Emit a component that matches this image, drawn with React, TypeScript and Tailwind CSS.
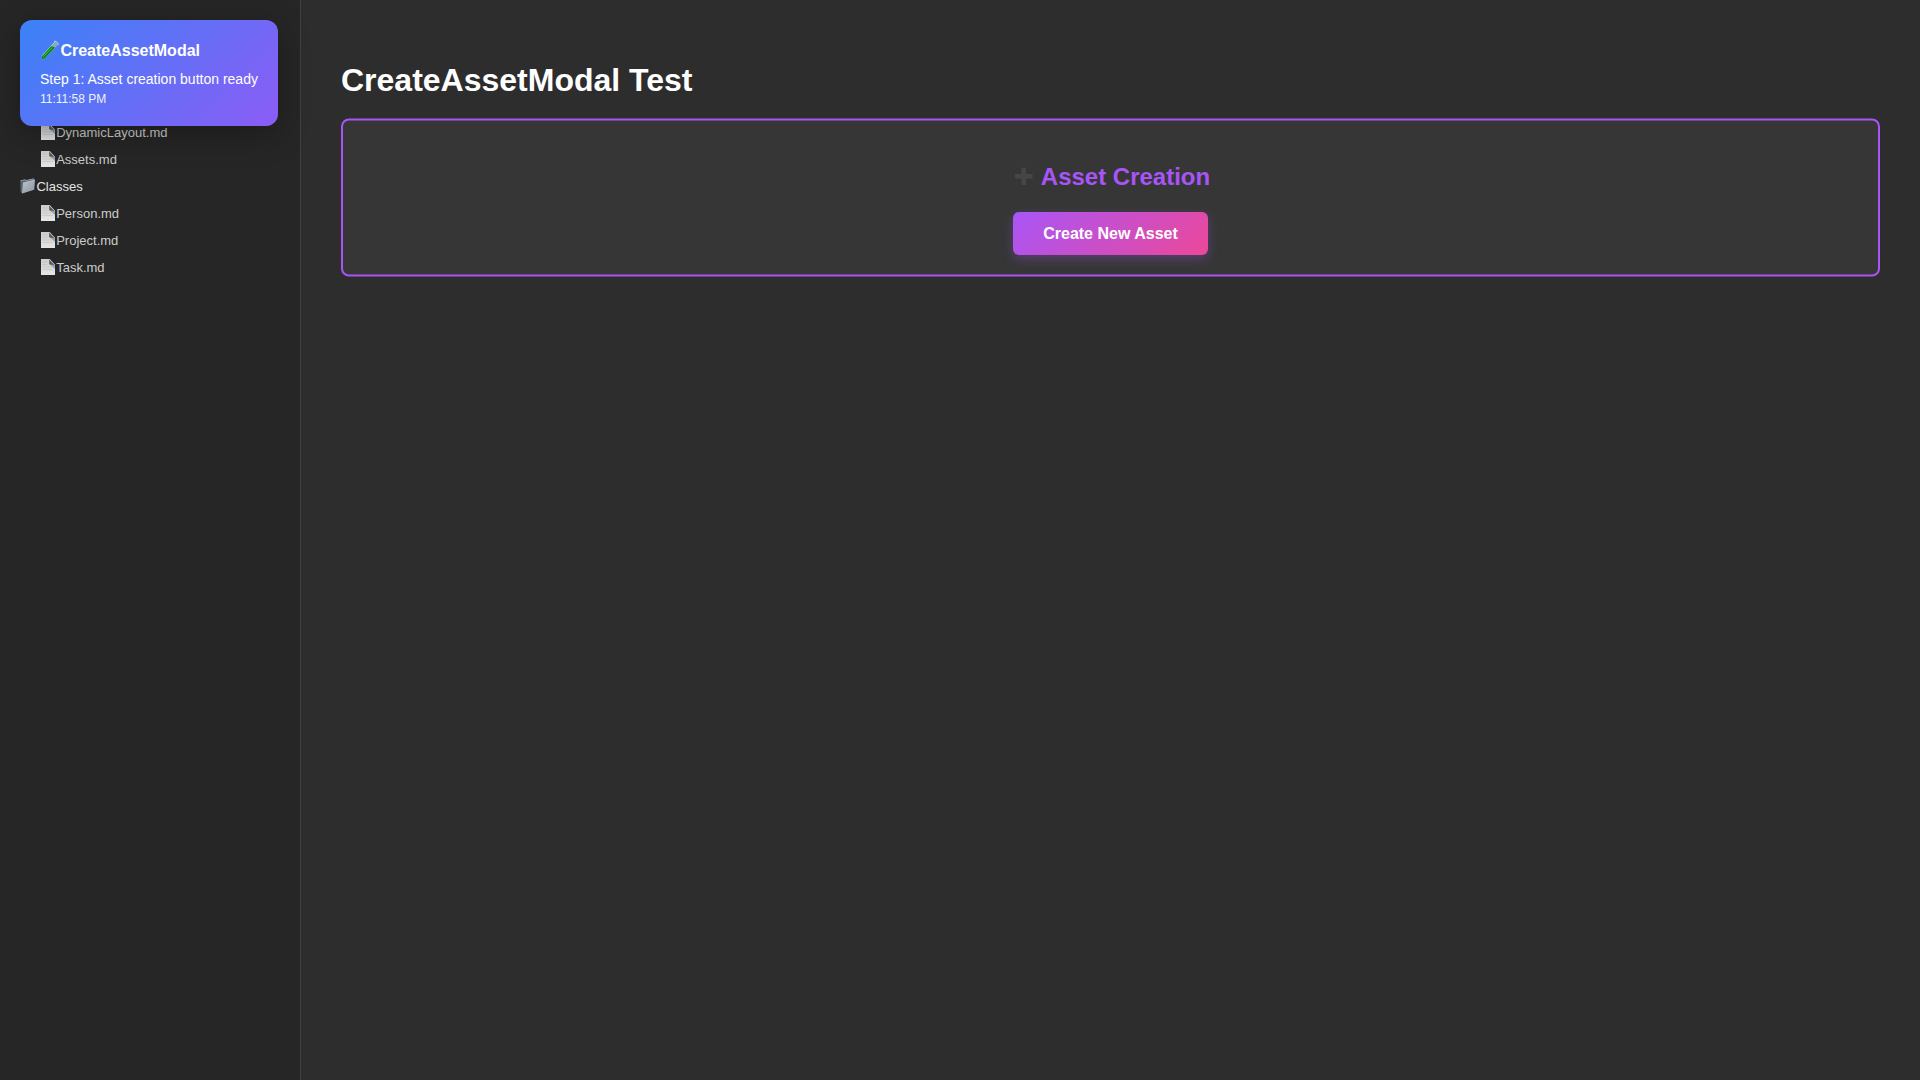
function FileIcon() {
  return (
    <svg className="relative -top-px h-4 w-[14px] shrink-0" viewBox="0 0 14 16">
      <defs>
        <linearGradient id="paper" x1="0" y1="0" x2="0" y2="1">
          <stop offset="0" stopColor="#cdcdcd" />
          <stop offset="1" stopColor="#e6e6e6" />
        </linearGradient>
        <linearGradient id="fold" x1="0" y1="1" x2="1" y2="0">
          <stop offset="0" stopColor="#3a3a3a" />
          <stop offset="1" stopColor="#8a8a8a" />
        </linearGradient>
      </defs>
      <path d="M0 0H8.5L14 6V16H0Z" fill="url(#paper)" />
      <path d="M7.5 4.5L14 6V10Z" fill="#8d8d8d" opacity=".7" />
      <path d="M8 .5L13.8 6.2L8.4 5.2Z" fill="url(#fold)" />
      <path d="M8.3 0L14 6" stroke="#bbb" strokeWidth=".7" />
      <path d="M1.5 3H6.5M1.5 5.5H6.5M1.5 8H11M1.5 10.5H12" stroke="#bdbdbd" strokeWidth=".6" />
    </svg>
  );
}

function FolderIcon() {
  return (
    <svg className="relative -top-px h-4 w-4 shrink-0" viewBox="0 0 16 16">
      <defs>
        <linearGradient id="folder" x1="0" y1="0" x2="1" y2="1">
          <stop offset="0" stopColor="#bcc5cc" />
          <stop offset="1" stopColor="#8a959f" />
        </linearGradient>
      </defs>
      <path d="M.3 2.6L5 1.6L6 2.3L13.8.6L14.6 1.6V11.6L2 15.4L.6 13.4Z" fill="#59656f" />
      <path d="M.5 2.8L5 1.8L6 2.5L13.8.9" stroke="#a9b4bc" strokeWidth=".7" fill="none" />
      <path d="M3 4.9L15 2L13.9 11.8L2 15.4Z" fill="url(#folder)" />
      <path d="M3 4.9L15 2" stroke="#dbe1e5" strokeWidth=".5" />
    </svg>
  );
}

function TubeIcon() {
  return (
    <svg className="h-5 w-5 shrink-0" viewBox="0 0 20 20">
      <path d="M14.8 1.5L18.3 4.4L4.5 18.8Q2.7 19.8 1.6 18.5Q.8 17.3 2 15.8Z" fill="#8ba9b6" />
      <path d="M11 6L15 7.4L4.4 18.4Q2.8 19.3 1.9 18.3Q1.2 17.3 2.2 16Z" fill="#08851c" />
      <path d="M3.2 16.8L12.3 7.5" stroke="#36c93c" strokeWidth="1" />
      <path d="M2 15.8L14.8 2" stroke="#c0d8e0" strokeWidth=".6" />
      <path d="M14.3 1Q17.6 1.6 18.8 4.6" stroke="#d0d7da" strokeWidth="1" fill="none" />
    </svg>
  );
}

function FileRow({ name }: { name: string }) {
  return (
    <div className="flex h-[27px] items-center pl-[21px] text-[#cccccc]">
      <FileIcon />
      <span className="ml-[1.2px]">{name}</span>
    </div>
  );
}

export default function App() {
  return (
    <div className="flex h-[1080px] w-full overflow-hidden bg-[#2d2d2d] font-['Liberation_Sans',Arial,sans-serif] text-white antialiased">
      <aside className="relative w-[301px] shrink-0 border-r border-[#404040] bg-[#262626] px-5 pt-[119px] text-[13px]">
        <FileRow name="DynamicLayout.md" />
        <FileRow name="Assets.md" />
        <div className="flex h-[27px] items-center text-[#e5e5e5]">
          <FolderIcon />
          <span className="ml-[0.4px]">Classes</span>
        </div>
        <FileRow name="Person.md" />
        <FileRow name="Project.md" />
        <FileRow name="Task.md" />
        <div className="absolute left-5 top-5 z-10 h-[106px] w-[258px] rounded-xl bg-[linear-gradient(135deg,#3b82f6,#8b5cf6)] px-5 pt-5 shadow-[0_8px_32px_rgba(0,0,0,0.3)]">
          <div className="flex h-5 items-center text-base font-bold">
            <TubeIcon />
            <span className="ml-[0.4px] pt-[2px]">CreateAssetModal</span>
          </div>
          <div className="mt-2.5 whitespace-nowrap text-sm leading-[18px]">Step 1: Asset creation button ready</div>
          <div className="mt-[3px] text-xs leading-4 opacity-90">11:11:58 PM</div>
        </div>
      </aside>
      <main className="min-w-0 flex-1 px-10 pt-[62px]">
        <h1 className="text-[32px] font-bold leading-[37px]">CreateAssetModal Test</h1>
        <section className="mt-5 flex h-[158px] -translate-y-[0.5px] flex-col items-center rounded-lg border-2 border-[#a855f7] bg-[#363636]">
          <h2 className="mt-[42px] flex h-7 items-center gap-[9px] pl-[3px] text-2xl font-bold text-[#a855f7]">
            <svg className="relative left-px h-[18px] w-[18px]" viewBox="0 0 18 18">
              <path d="M6.5 0H11V6.5H17.5V11H11V17.5H6.5V11H0V6.5H6.5Z" fill="#464646" />
            </svg>
            Asset Creation
          </h2>
          <button className="mt-[21px] h-[43px] w-[195px] shrink-0 translate-y-[0.5px] rounded-md bg-[linear-gradient(135deg,#a855f7,#ec4899)] pt-[1px] text-base font-bold shadow-[0_4px_12px_rgba(168,85,247,0.3)]">
            Create New Asset
          </button>
        </section>
      </main>
    </div>
  );
}
